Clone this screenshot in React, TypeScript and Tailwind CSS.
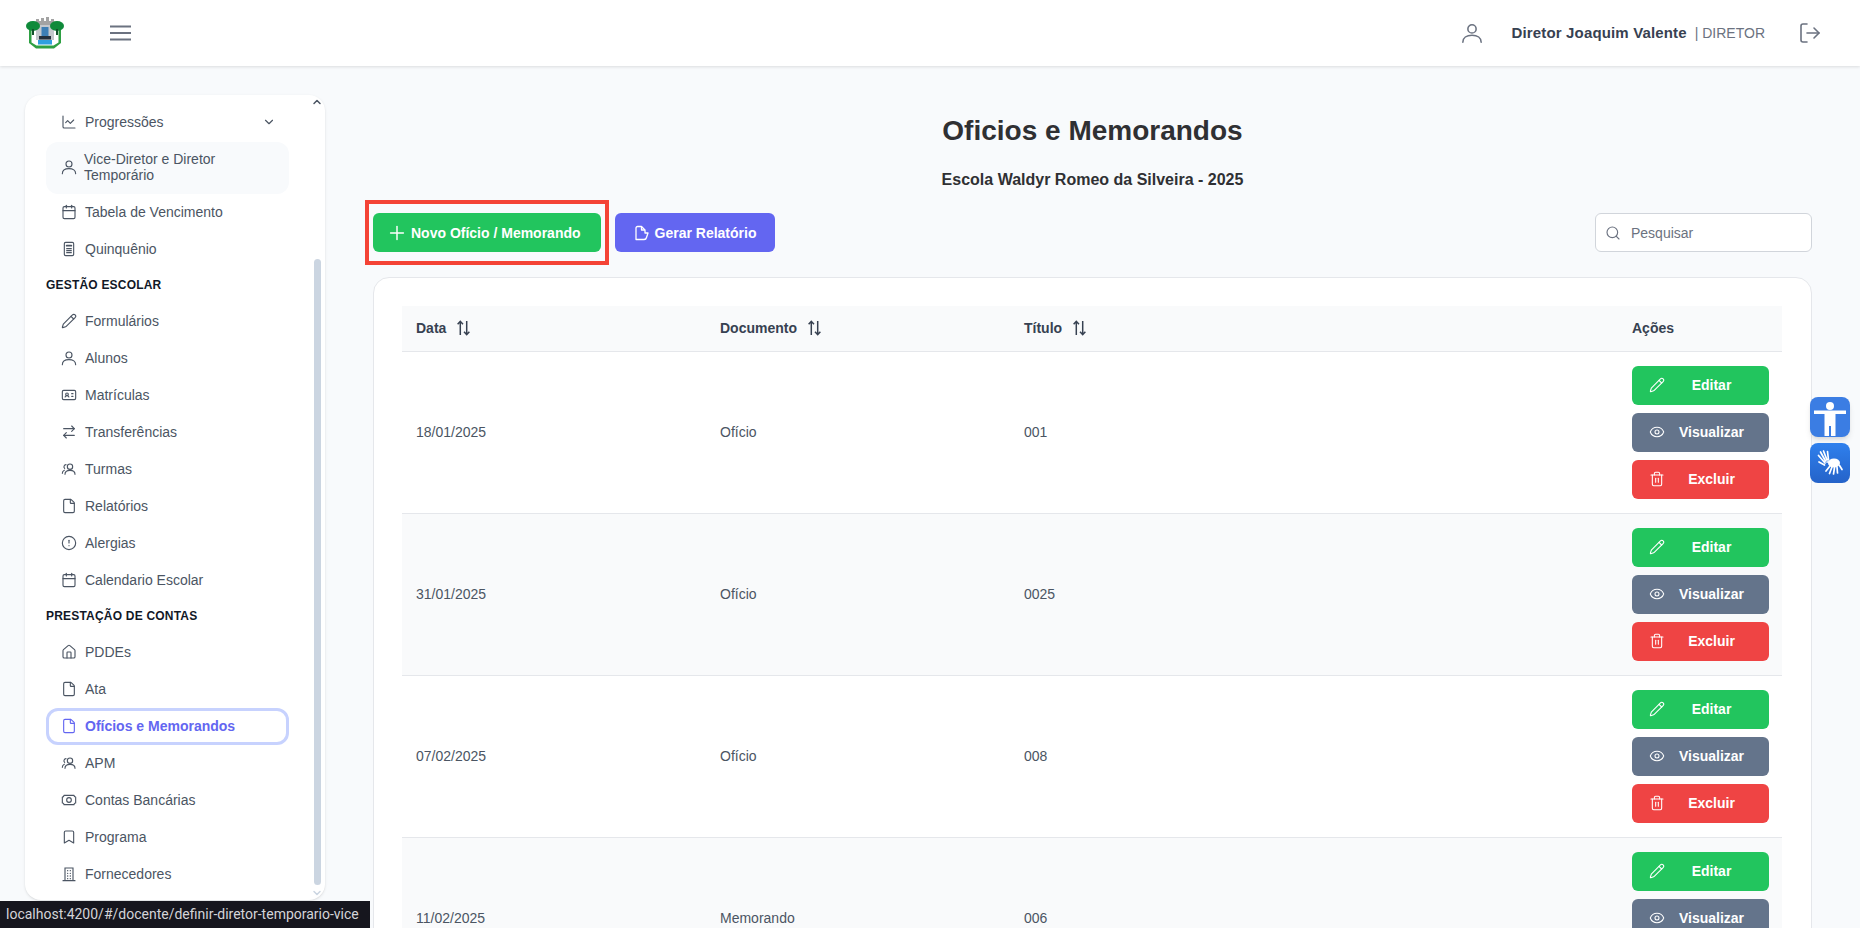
import {
  Bookmark,
  Calendar,
  ChartLine,
  ChevronDown,
  ChevronUp,
  CircleAlert,
  Eye,
  File,
  House,
  IdCard,
  LogOut,
  Pencil,
  Plus,
  Search,
  Trash2,
  ArrowRightLeft,
} from 'lucide-react';
import type { ComponentType, ReactNode } from 'react';

interface IconProps {
  size?: number;
  strokeWidth?: number;
  className?: string;
}

type IconType = ComponentType<IconProps>;

interface NavEntry {
  name: string;
  icon: IconType;
}

function UserIcon({ size = 16, strokeWidth = 1.7, className }: IconProps) {
  return (
    <svg width={size} height={size} viewBox="0 0 24 24" fill="none" stroke="currentColor" strokeWidth={strokeWidth} strokeLinecap="round" className={className}>
      <circle cx="12" cy="7.5" r="4.5" />
      <path d="M2 22c0-4.5 4-7.5 10-7.5s10 3 10 7.5" />
    </svg>
  );
}

// pi-users look: main person in front, second one behind on the left
function UsersIcon({ size = 16, strokeWidth = 1.7, className }: IconProps) {
  return (
    <svg width={size} height={size} viewBox="0 0 24 24" fill="none" stroke="currentColor" strokeWidth={strokeWidth} strokeLinecap="round" className={className}>
      <circle cx="13.5" cy="8.5" r="4" />
      <path d="M6 20c0-3.6 3.2-6 7.5-6s7.5 2.4 7.5 6" />
      <path d="M7.5 5.5a3.2 3.2 0 0 0-2 5.6" />
      <path d="M2 18.5c0-2.2 1-3.8 3-4.7" />
    </svg>
  );
}

function ReportIcon({ size = 16, strokeWidth = 1.7, className }: IconProps) {
  return (
    <svg width={size} height={size} viewBox="0 0 24 24" fill="none" stroke="currentColor" strokeWidth={strokeWidth} strokeLinecap="round" className={className}>
      <rect x="5" y="2" width="14" height="20" rx="2" />
      <path d="M8.500 7h7" strokeWidth={strokeWidth + 1} />
      <path d="M8.500 11.500h7M8.500 14.500h7M8.500 17.500h7" />
    </svg>
  );
}

function MoneyIcon({ size = 16, strokeWidth = 1.7, className }: IconProps) {
  return (
    <svg width={size} height={size} viewBox="0 0 24 24" fill="none" stroke="currentColor" strokeWidth={strokeWidth} strokeLinejoin="round" className={className}>
      <path d="M4.500 5h15a2.500 2.500 0 0 0 2.500 2.500v9a2.500 2.500 0 0 0-2.500 2.500h-15A2.500 2.500 0 0 0 2 16.500v-9A2.500 2.500 0 0 0 4.500 5Z" />
      <circle cx="12" cy="12" r="3.500" />
    </svg>
  );
}

function BuildingIcon({ size = 16, strokeWidth = 1.7, className }: IconProps) {
  return (
    <svg width={size} height={size} viewBox="0 0 24 24" fill="none" stroke="currentColor" strokeWidth={strokeWidth} strokeLinecap="round" className={className}>
      <path d="M3 22h18M6 22V3h12v19" />
      <path d="M10 7h.01M14 7h.01M10 11h.01M14 11h.01M10 15h.01M14 15h.01M10 19h.01M14 19h.01" strokeWidth={strokeWidth + 0.4} />
    </svg>
  );
}

function MenuIcon() {
  return (
    <svg width="21" height="16" viewBox="0 0 21 16" fill="none" stroke="#6b7280" strokeWidth="2.2" className="ml-[46px] shrink-0">
      <path d="M0 1.500h21M0 8h21M0 14.500h21" />
    </svg>
  );
}

function FileExportIcon() {
  return (
    <svg width="15" height="16" viewBox="0 0 15 16" fill="none" stroke="currentColor" strokeWidth="1.3" strokeLinejoin="round" className="shrink-0">
      <path d="M2 14.500V3a1.500 1.500 0 0 1 1.500-1.500H7.500L11 5v3H14l-1.500 4.500A2.500 2.500 0 0 1 10 14.500H2Z" />
      <path d="M7.500 1.500V5H11" />
    </svg>
  );
}

function SortIcon() {
  return (
    <svg width="15" height="16" viewBox="0 0 14 15" fill="none" stroke="#374151" strokeWidth="1.4" className="shrink-0">
      <path d="M4 14V1.500M1.500 4 4 1.200 6.500 4" />
      <path d="M10 1v12.500M7.500 11l2.500 2.800 2.500-2.800" />
    </svg>
  );
}

function Logo() {
  return (
    <svg width="38" height="33" viewBox="0 0 38 33" className="shrink-0">
      <path d="M10 2h3v2h2V1h3v3h2V0h3v4h2V2h3v6H10z" fill="#a3a3a3" />
      <path d="M3 26V13h2.500v12.500l5 3h17l5-3V13H35v13l-7 5.500H10z" fill="#2ea043" />
      <rect x="10" y="8" width="18" height="15" fill="#c4c8cc" />
      <rect x="15.500" y="10" width="7" height="10" fill="#3d7fb5" />
      <rect x="13" y="19" width="12" height="3.500" fill="#24303c" />
      <rect x="12" y="23" width="14" height="4.500" fill="#2f9fe0" />
      <ellipse cx="7" cy="9" rx="7" ry="5" fill="#0f8a3a" />
      <ellipse cx="31" cy="9" rx="7" ry="5" fill="#0f8a3a" />
      <rect x="6" y="12" width="2" height="6" fill="#14532d" />
      <rect x="30" y="12" width="2" height="6" fill="#14532d" />
    </svg>
  );
}

function AccessibilityIcon() {
  return (
    <svg width="32" height="40" viewBox="0 0 32 40" fill="white">
      <circle cx="16" cy="9" r="4" />
      <path d="M0 13.500h32v3.500H21.500v22H17V29h-2v10h-4.500V17H0z" />
    </svg>
  );
}

function SignLanguageIcon() {
  return (
    <svg width="40" height="40" viewBox="0 0 40 40" fill="none" stroke="white" strokeWidth="1.700" strokeLinecap="round">
      <path d="M15 20 8.500 12.500M15.500 18 10.500 9M17 17 13.500 8M18.500 17l-1-8.500M14.500 22l-5.500-3" />
      <ellipse cx="24" cy="20" rx="6" ry="4.500" fill="white" stroke="none" />
      <path d="M17 19h6M20 23l-4 5M22 24l-2.500 6.500M24.500 24.500 23.500 31M27 24l.5 6M29.500 22.500l2.500 4" />
    </svg>
  );
}

const topGroup: NavEntry[] = [
  { name: 'Tabela de Vencimento', icon: Calendar },
  { name: 'Quinquênio', icon: ReportIcon },
];

const gestaoGroup: NavEntry[] = [
  { name: 'Formulários', icon: Pencil },
  { name: 'Alunos', icon: UserIcon },
  { name: 'Matrículas', icon: IdCard },
  { name: 'Transferências', icon: ArrowRightLeft },
  { name: 'Turmas', icon: UsersIcon },
  { name: 'Relatórios', icon: File },
  { name: 'Alergias', icon: CircleAlert },
  { name: 'Calendario Escolar', icon: Calendar },
];

const contasGroup: NavEntry[] = [
  { name: 'PDDEs', icon: House },
  { name: 'Ata', icon: File },
  { name: 'Ofícios e Memorandos', icon: File },
  { name: 'APM', icon: UsersIcon },
  { name: 'Contas Bancárias', icon: MoneyIcon },
  { name: 'Programa', icon: Bookmark },
  { name: 'Fornecedores', icon: BuildingIcon },
];

const rows = [
  { data: '18/01/2025', documento: 'Ofício', titulo: '001' },
  { data: '31/01/2025', documento: 'Ofício', titulo: '0025' },
  { data: '07/02/2025', documento: 'Ofício', titulo: '008' },
  { data: '11/02/2025', documento: 'Memorando', titulo: '006' },
];

function NavItem({ item }: { item: NavEntry }) {
  const active = item.name === 'Ofícios e Memorandos';
  const Icon = item.icon;
  return (
    <div
      className={`flex h-[37px] items-center gap-2 rounded-xl text-[14px] ${
        active ? 'border-[3px] border-[#c7d2fe] pl-3 font-bold text-[#6366f1]' : 'pl-[15px] text-[#4b5563]'
      }`}
    >
      <Icon size={16} strokeWidth={1.7} className="shrink-0" />
      <span>{item.name}</span>
    </div>
  );
}

function SectionTitle({ children }: { children: ReactNode }) {
  return <div className="flex h-[35px] items-center text-[12px] font-bold tracking-[0.2px] text-[#111827]">{children}</div>;
}

function Sidebar() {
  return (
    <aside className="relative h-[805px] w-[300px] shrink-0 overflow-hidden rounded-2xl bg-white shadow-sm">
      <div className="ml-[21px] w-[243px] pt-[9px]">
        <div className="flex h-[36px] items-center gap-2 pl-[15px] pr-[13px] text-[14px] text-[#4b5563]">
          <ChartLine size={16} strokeWidth={1.7} className="shrink-0" />
          <span className="flex-1">Progressões</span>
          <ChevronDown size={14} strokeWidth={2} />
        </div>
        <div className="mt-[1.5px] flex h-[52px] items-center gap-[7px] rounded-xl bg-[#f8fafc] pb-[1px] pl-[15px] pr-4 text-[14px] leading-4 text-[#4b5563]">
          <UserIcon size={16} className="shrink-0" />
          <span>Vice-Diretor e Diretor Temporário</span>
        </div>
        {topGroup.map((item) => (
          <NavItem key={item.name} item={item} />
        ))}
        <SectionTitle>GESTÃO ESCOLAR</SectionTitle>
        {gestaoGroup.map((item) => (
          <NavItem key={item.name} item={item} />
        ))}
        <SectionTitle>PRESTAÇÃO DE CONTAS</SectionTitle>
        {contasGroup.map((item) => (
          <NavItem key={item.name} item={item} />
        ))}
      </div>
      {/* scrollbar */}
      <ChevronUp size={12} strokeWidth={3} className="absolute right-[2px] top-[1px] text-[#4b5563]" />
      <div className="absolute right-[4px] top-[164px] h-[626px] w-[7px] rounded-sm bg-[#cbd5e1]" />
      <ChevronDown size={12} strokeWidth={3} className="absolute bottom-[1px] right-[2px] text-[#cbd5e1]" />
    </aside>
  );
}

function RowActions() {
  const btn = 'flex h-[39px] w-[137px] items-center rounded-md pl-[17px] pr-[11px] text-[14px] font-bold text-white';
  return (
    <div className="flex flex-col gap-2">
      <button className={`${btn} bg-[#22c55e]`}>
        <Pencil size={16} strokeWidth={1.6} className="shrink-0" />
        <span className="flex-1 text-center">Editar</span>
      </button>
      <button className={`${btn} bg-[#64748b]`}>
        <Eye size={16} strokeWidth={1.6} className="shrink-0" />
        <span className="flex-1 text-center">Visualizar</span>
      </button>
      <button className={`${btn} bg-[#ef4444]`}>
        <Trash2 size={16} strokeWidth={1.6} className="shrink-0" />
        <span className="flex-1 text-center">Excluir</span>
      </button>
    </div>
  );
}

export default function App() {
  return (
    <div className="relative flex h-[928px] flex-col overflow-hidden bg-[#f8fafc] font-['Liberation_Sans',Arial,sans-serif]">
      <header className="z-10 flex h-[66px] shrink-0 items-center bg-white pl-[26px] pr-[38px] shadow-[0_1px_3px_rgba(0,0,0,0.12)]">
        <Logo />
        <MenuIcon />
        <div className="flex-1" />
        <UserIcon size={22} strokeWidth={1.7} className="text-[#6b7280]" />
        <span className="ml-[29px] text-[15px] font-bold tracking-[0.15px] text-[#374151]">Diretor Joaquim Valente</span>
        <span className="ml-2 text-[14px] text-[#6b7280]">| DIRETOR</span>
        <LogOut size={24} strokeWidth={1.6} className="ml-[33px] text-[#6b7280]" />
      </header>

      <div className="flex flex-1 overflow-hidden pl-[25px] pr-[48px] pt-[29px]">
        <Sidebar />
        <main className="ml-[48px] flex-1">
          <h1 className="mt-[20px] text-center text-[28px] font-bold leading-8 text-[#2f3033]">Oficios e Memorandos</h1>
          <p className="mt-[23px] text-center text-[16px] font-bold leading-5 text-[#2f3033]">Escola Waldyr Romeo da Silveira - 2025</p>

          <div className="mt-[23px] flex items-center">
            <div className="relative">
              <button className="flex h-[39px] w-[228px] items-center justify-start gap-[3px] rounded-md bg-[#22c55e] pl-[13px] pt-[1px] text-[14px] font-bold text-white">
                <Plus size={22} strokeWidth={1.6} />
                Novo Ofício / Memorando
              </button>
              <div className="absolute -inset-x-[8px] -inset-y-[13px] border-4 border-[#f44336]" />
            </div>
            <button className="ml-[14px] flex h-[39px] w-[160px] items-center justify-center gap-[6px] rounded-md bg-[#6366f1] pt-[1px] text-[14px] font-bold text-white">
              <FileExportIcon />
              Gerar Relatório
            </button>
            <div className="flex-1" />
            <div className="flex h-[39px] w-[217px] items-center gap-[10px] rounded-md border border-[#d1d5db] bg-white pl-[9px] pt-[1px] text-[14px] text-[#6b7280]">
              <Search size={16} strokeWidth={1.7} />
              Pesquisar
            </div>
          </div>

          <section className="mt-[25px] rounded-t-2xl border border-[#e5e7eb] bg-white px-[28px] pt-[28px]">
            <table className="w-[1380px] table-fixed border-collapse text-left text-[14px] text-[#4b5563]">
              <colgroup>
                <col className="w-[304px]" />
                <col className="w-[304px]" />
                <col className="w-[608px]" />
                <col className="w-[164px]" />
              </colgroup>
              <thead>
                <tr className="h-[45px] border-b border-[#e5e7eb] bg-[#f9fafb] text-[#374151]">
                  <th className="px-[14px] font-bold">
                    <span className="flex items-center gap-[10px]">Data <SortIcon /></span>
                  </th>
                  <th className="px-[14px] font-bold">
                    <span className="flex items-center gap-[10px]">Documento <SortIcon /></span>
                  </th>
                  <th className="px-[14px] font-bold">
                    <span className="flex items-center gap-[10px]">Título <SortIcon /></span>
                  </th>
                  <th className="px-[14px] font-bold">Ações</th>
                </tr>
              </thead>
              <tbody>
                {rows.map((row, i) => (
                  <tr key={row.data} className={`border-b border-[#e5e7eb] ${i % 2 === 1 ? 'bg-[#f9fafb]' : 'bg-white'}`}>
                    <td className="px-[14px]">{row.data}</td>
                    <td className="px-[14px]">{row.documento}</td>
                    <td className="px-[14px]">{row.titulo}</td>
                    <td className="px-[14px] py-[14px]">
                      <RowActions />
                    </td>
                  </tr>
                ))}
              </tbody>
            </table>
          </section>
        </main>
      </div>

      {/* floating accessibility widgets */}
      <div className="absolute left-[1810px] top-[397px] flex flex-col gap-[6px]">
        <div className="flex h-10 w-10 items-center justify-center overflow-hidden rounded-lg bg-[#3b7de3] shadow-md">
          <AccessibilityIcon />
        </div>
        <div className="h-10 w-10 overflow-hidden rounded-lg bg-linear-to-b from-[#2f80ed] to-[#2563c9]">
          <SignLanguageIcon />
        </div>
      </div>

      {/* browser status bubble */}
      <div className="absolute bottom-0 left-0 flex h-[27px] w-[370px] items-center bg-[#16161e] pl-[6px] font-['Roboto',sans-serif] text-[14px] text-[#d4d4d8]">
        localhost:4200/#/docente/definir-diretor-temporario-vice
      </div>
    </div>
  );
}
